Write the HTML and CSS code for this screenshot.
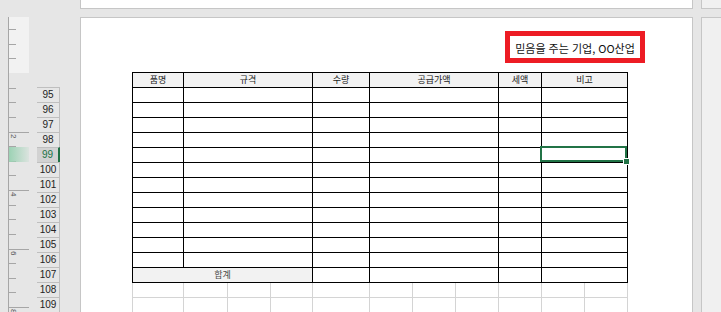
FILE: index.html
```html
<!DOCTYPE html>
<html lang="ko">
<head>
    <meta charset="UTF-8">
    <title>견적서 - 페이지 레이아웃</title>
    <link rel="stylesheet" href="styles.css">
</head>
<body>
    <div class="app">
        <!-- vertical ruler -->
        <aside class="ruler-col">
            <div class="ruler">
                <div class="ruler-margin">
                    <div class="tick"></div><div class="tick"></div><div class="tick"></div>
                </div>
                <div class="seg">
                    <div class="tick blank"></div><div class="tick"></div><div class="tick"></div><div class="tick"></div>
                </div>
                <div class="seg">
                    <div class="tick major"><span class="num">2</span></div><div class="tick"></div><div class="tick"></div><div class="tick"></div>
                </div>
                <div class="seg">
                    <div class="tick major"><span class="num">4</span></div><div class="tick"></div><div class="tick"></div><div class="tick"></div>
                </div>
                <div class="seg">
                    <div class="tick major"><span class="num">6</span></div><div class="tick"></div><div class="tick"></div><div class="tick"></div>
                </div>
                <div class="seg">
                    <div class="tick major last"><span class="num">8</span></div>
                </div>
                <div class="ruler-hl"></div>
            </div>
        </aside>

        <!-- row numbers -->
        <div class="row-heads">
            <div class="rh">95</div>
            <div class="rh">96</div>
            <div class="rh">97</div>
            <div class="rh">98</div>
            <div class="rh sel">99</div>
            <div class="rh">100</div>
            <div class="rh">101</div>
            <div class="rh">102</div>
            <div class="rh">103</div>
            <div class="rh">104</div>
            <div class="rh">105</div>
            <div class="rh">106</div>
            <div class="rh">107</div>
            <div class="rh">108</div>
            <div class="rh">109</div>
        </div>

        <main class="pages">
            <div class="page page-prev"></div>
            <div class="page page-side page-side-top"></div>

            <div class="page page-main">
                <div class="title-row">
                    <div class="title">믿음을 주는 기업, OO산업</div>
                </div>

                <div class="sheet">
                    <div class="cell head">품명</div><div class="cell head s3">규격</div><div class="cell head">수량</div><div class="cell head s3">공급가액</div><div class="cell head">세액</div><div class="cell head s2">비고</div>

                    <div class="cell"></div><div class="cell s3"></div><div class="cell"></div><div class="cell s3"></div><div class="cell"></div><div class="cell s2"></div>
                    <div class="cell"></div><div class="cell s3"></div><div class="cell"></div><div class="cell s3"></div><div class="cell"></div><div class="cell s2"></div>
                    <div class="cell"></div><div class="cell s3"></div><div class="cell"></div><div class="cell s3"></div><div class="cell"></div><div class="cell s2"></div>
                    <div class="cell"></div><div class="cell s3"></div><div class="cell"></div><div class="cell s3"></div><div class="cell"></div><div class="cell s2"></div>
                    <div class="cell"></div><div class="cell s3"></div><div class="cell"></div><div class="cell s3"></div><div class="cell"></div><div class="cell s2 active"></div>
                    <div class="cell"></div><div class="cell s3"></div><div class="cell"></div><div class="cell s3"></div><div class="cell"></div><div class="cell s2"></div>
                    <div class="cell"></div><div class="cell s3"></div><div class="cell"></div><div class="cell s3"></div><div class="cell"></div><div class="cell s2"></div>
                    <div class="cell"></div><div class="cell s3"></div><div class="cell"></div><div class="cell s3"></div><div class="cell"></div><div class="cell s2"></div>
                    <div class="cell"></div><div class="cell s3"></div><div class="cell"></div><div class="cell s3"></div><div class="cell"></div><div class="cell s2"></div>
                    <div class="cell"></div><div class="cell s3"></div><div class="cell"></div><div class="cell s3"></div><div class="cell"></div><div class="cell s2"></div>
                    <div class="cell"></div><div class="cell s3"></div><div class="cell"></div><div class="cell s3"></div><div class="cell"></div><div class="cell s2"></div>
                    <div class="cell"></div><div class="cell s3"></div><div class="cell"></div><div class="cell s3"></div><div class="cell"></div><div class="cell s2"></div>

                    <div class="cell head total s4">합계</div><div class="cell"></div><div class="cell s3"></div><div class="cell"></div><div class="cell s2"></div>
                </div>

                <div class="grid-below">
                    <div></div><div></div><div></div><div></div><div></div><div></div><div></div><div></div><div></div><div></div><div></div>
                    <div></div><div></div><div></div><div></div><div></div><div></div><div></div><div></div><div></div><div></div><div></div>
                </div>
            </div>

            <div class="page page-side"></div>
        </main>
    </div>
</body>
</html>
```

FILE: styles.css
```css
html, body {
    margin: 0;
    height: 312px;
    overflow: hidden;
}
body {
    background: #e6e6e6;
    font-family: "Liberation Sans", "Noto Sans CJK KR", sans-serif;
}
.app {
    display: flex;
    height: 312px;
}

/* ruler */
.ruler-col {
    width: 37px;
    flex: none;
}
.ruler {
    position: relative;
    margin: 17px 0 0 8px;
    width: 20px;
    height: 295px;
    border-left: 1px solid #a6a6a6;
    display: flex;
    flex-direction: column;
    overflow: hidden;
}
.ruler-margin {
    height: 56px;
    flex: none;
    box-sizing: border-box;
    padding-top: 12px;
    background: #f2f2f2;
}
.seg {
    display: flex;
    flex-direction: column;
    flex: none;
}
.tick {
    height: 14.625px;
    width: 7px;
    flex: none;
    box-sizing: border-box;
    border-top: 1px solid #a6a6a6;
}
.tick.blank {
    border-top-color: transparent;
}
.tick.major {
    width: 20px;
}
.tick.last {
    height: 5px;
}
.num {
    display: block;
    writing-mode: vertical-rl;
    font-size: 8px;
    line-height: 8px;
    color: #555;
    margin: 1px 0 0 0;
}
.ruler-hl {
    position: absolute;
    top: 130px;
    left: 0;
    width: 20px;
    height: 15px;
    background: linear-gradient(to right, #9cd2b4, rgba(156, 210, 180, 0.15));
}

/* row headers */
.row-heads {
    width: 23px;
    flex: none;
    padding-top: 87px;
}
.rh {
    height: 15px;
    box-sizing: border-box;
    border-top: 1px solid #bfbfbf;
    border-right: 1px solid #bfbfbf;
    text-align: center;
    font-size: 10px;
    line-height: 14px;
    color: #222;
}
.rh.sel {
    background: #d2d2d2;
    color: #217346;
    border-right: 2px solid #217346;
}

/* pages */
.pages {
    margin-left: 20px;
    flex: 1;
    display: grid;
    grid-template-columns: 613px 1fr;
    grid-template-rows: 9px 1fr;
    gap: 8px;
}
.page {
    box-sizing: border-box;
    background: #fff;
    border: 1px solid #c6c6c6;
}
.page-prev {
    border-top: none;
}
.page-side {
    background: #f0f0f0;
    border-right: none;
    border-bottom: none;
}
.page-side-top {
    border-top: none;
    border-bottom: 1px solid #c6c6c6;
}
.page-main {
    border-bottom: none;
    padding: 13px 0 0 51px;
    overflow: hidden;
}

.title-row {
    display: flex;
    justify-content: flex-end;
    margin-right: 47px;
}
.title {
    width: 140px;
    height: 32px;
    box-sizing: border-box;
    border: 5px solid #ed1c24;
    display: flex;
    align-items: center;
    justify-content: center;
    font-family: "Noto Sans CJK KR", sans-serif;
    font-size: 11px;
    color: #111;
    padding-top: 1px;
}

/* table */
.sheet, .grid-below {
    display: grid;
    grid-template-columns: 51px 44px 43px 42px 57px 43px 43px 43px 43px 43px 43px;
    grid-auto-rows: 15px;
    width: 495px;
}
.sheet {
    margin-top: 9px;
    border-left: 1px solid #000;
    border-top: 1px solid #000;
}
.cell {
    position: relative;
    box-sizing: border-box;
    border-right: 1px solid #000;
    border-bottom: 1px solid #000;
}
.s2 { grid-column: span 2; }
.s3 { grid-column: span 3; }
.s4 { grid-column: span 4; }
.head {
    background: #f2f2f2;
    text-align: center;
    font-family: "Noto Sans CJK KR", sans-serif;
    font-size: 9px;
    line-height: 14px;
    color: #1a1a1a;
}
.total {
    color: #4a4a4a;
}
.active::after {
    content: "";
    position: absolute;
    top: -2px;
    left: -2px;
    right: 0;
    bottom: 0;
    border: 2px solid #217346;
    z-index: 1;
}
.active::before {
    content: "";
    position: absolute;
    right: -2px;
    bottom: -2px;
    width: 5px;
    height: 5px;
    background: #217346;
    box-shadow: 0 0 0 1px #fff;
    z-index: 2;
}

.grid-below {
    grid-auto-rows: 15px 14px;
    border-left: 1px solid #d4d4d4;
}
.grid-below div {
    box-sizing: border-box;
    border-right: 1px solid #d4d4d4;
    border-bottom: 1px solid #d4d4d4;
}
.grid-below div:nth-child(n+12) {
    border-bottom: none;
}
```
